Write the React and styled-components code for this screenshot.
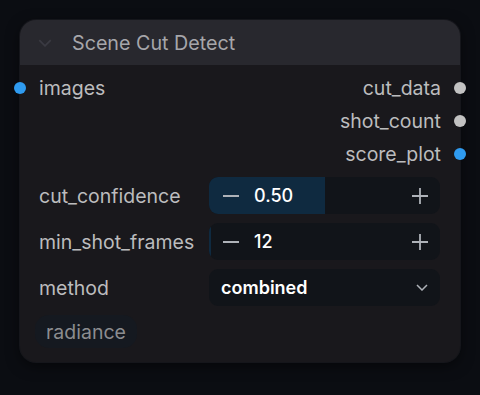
import React from "react";
import styled, { createGlobalStyle } from "styled-components";

const Global = createGlobalStyle`
  html, body { margin: 0; padding: 0; background: #0b0d12; }
  body { font-family: Inter, "Noto Sans", sans-serif; }
`;

const Page = styled.div`
  width: 480px;
  height: 395px;
  padding: 20px;
  box-sizing: border-box;
  background: #0b0d12;
`;

const Card = styled.div`
  width: 440px;
  border-radius: 16px;
  background: #19181c;
  box-shadow: 0 0 0 1px #15161b, 0 4px 14px rgba(0,0,0,0.5);
  position: relative;
  padding-bottom: 14px;
`;

const Header = styled.div`
  height: 45px;
  display: flex;
  align-items: center;
  gap: 20px;
  padding-left: 18px;
  background: #28282e;
  border-radius: 16px 16px 0 0;
  color: #a6a6aa;
  font-size: 19.7px;
`;

const Body = styled.div`
  padding-top: 6px;
  display: flex;
  flex-direction: column;
`;

const Slot = styled.div`
  height: 33px;
  display: flex;
  align-items: center;
  justify-content: ${(p) => (p.$out ? "flex-end" : "flex-start")};
  padding: 0 19px;
  color: #bcbcbe;
  font-size: 19.5px;
  position: relative;
`;

const Dot = styled.span`
  position: absolute;
  top: 50%;
  width: 12px;
  height: 12px;
  margin-top: -6px;
  border-radius: 50%;
  background: ${(p) => p.$color};
  ${(p) => (p.$out ? "right: -6px;" : "left: -6px;")}
`;

const Widgets = styled.div`
  display: flex;
  flex-direction: column;
  gap: 9px;
  margin-top: 7px;
  padding: 0 20px 0 19px;
`;

const WRow = styled.div`
  height: 37px;
  display: flex;
  align-items: center;
`;

const WLabel = styled.div`
  width: 170px;
  color: #bcbcbe;
  font-size: 19.5px;
`;

const Box = styled.div`
  flex: 1;
  height: 37px;
  border-radius: 9px;
  background: #111419;
  position: relative;
  overflow: hidden;
  display: flex;
  align-items: center;
  padding: 0 10px 0 12px;
  color: #ffffff;
  font-size: 18px;
  font-weight: 500;
`;

const Fill = styled.div`
  position: absolute;
  left: 0;
  top: 0;
  bottom: 0;
  background: #0f2a40;
`;

const Btn = styled.span`
  position: relative;
  display: flex;
  align-items: center;
  justify-content: center;
  width: 20px;
  height: 20px;
  color: #aeb2b8;
`;

const Value = styled.span`
  position: relative;
  margin-left: 13px;
  flex: 1;
`;

const Combo = styled(Box)`
  padding: 0 12px 0 12px;
  font-weight: 600;
`;

const Badge = styled.div`
  margin: 9px 0 0 15px;
  align-self: flex-start;
  height: 33px;
  padding: 0 11px 0 11px;
  display: flex;
  align-items: center;
  border-radius: 14px;
  background: #151920;
  color: #8c8d90;
  font-size: 19.5px;
`;

const Minus = () => (
  <svg width="18" height="18" viewBox="0 0 18 18">
    <path d="M1 9h16" stroke="currentColor" strokeWidth="1.8" />
  </svg>
);
const Plus = () => (
  <svg width="18" height="18" viewBox="0 0 18 18">
    <path d="M1 9h16M9 1v16" stroke="currentColor" strokeWidth="1.8" />
  </svg>
);
const Chevron = ({ color = "#aeb2b8", w = 12, h = 7 }) => (
  <svg width={w} height={h} viewBox="0 0 12 7">
    <path d="M1 1l5 5 5-5" fill="none" stroke={color} strokeWidth="1.5" />
  </svg>
);

function Number({ value, pct }) {
  return (
    <Box>
      <Fill style={{ width: pct }} />
      <Btn><Minus /></Btn>
      <Value>{value}</Value>
      <Btn><Plus /></Btn>
    </Box>
  );
}

export default function App() {
  return (
    <Page>
      <Global />
      <Card>
        <Header>
          <Chevron color="#3a3a42" w={14} h={8} />
          <span>Scene Cut Detect</span>
        </Header>
        <Body>
          <Slot>
            <Dot $color="#2f9bf0" />
            images
          </Slot>
          <Slot $out style={{ marginTop: -33 }}>
            cut_data
            <Dot $out $color="#c2c2c2" />
          </Slot>
          <Slot $out>
            shot_count
            <Dot $out $color="#c2c2c2" />
          </Slot>
          <Slot $out>
            score_plot
            <Dot $out $color="#2f9bf0" />
          </Slot>
          <Widgets>
            <WRow>
              <WLabel>cut_confidence</WLabel>
              <Number value="0.50" pct="50%" />
            </WRow>
            <WRow>
              <WLabel>min_shot_frames</WLabel>
              <Number value="12" pct="2px" />
            </WRow>
            <WRow>
              <WLabel>method</WLabel>
              <Combo>
                <Value style={{ marginLeft: 0 }}>combined</Value>
                <Chevron />
              </Combo>
            </WRow>
          </Widgets>
          <Badge>radiance</Badge>
        </Body>
      </Card>
    </Page>
  );
}
